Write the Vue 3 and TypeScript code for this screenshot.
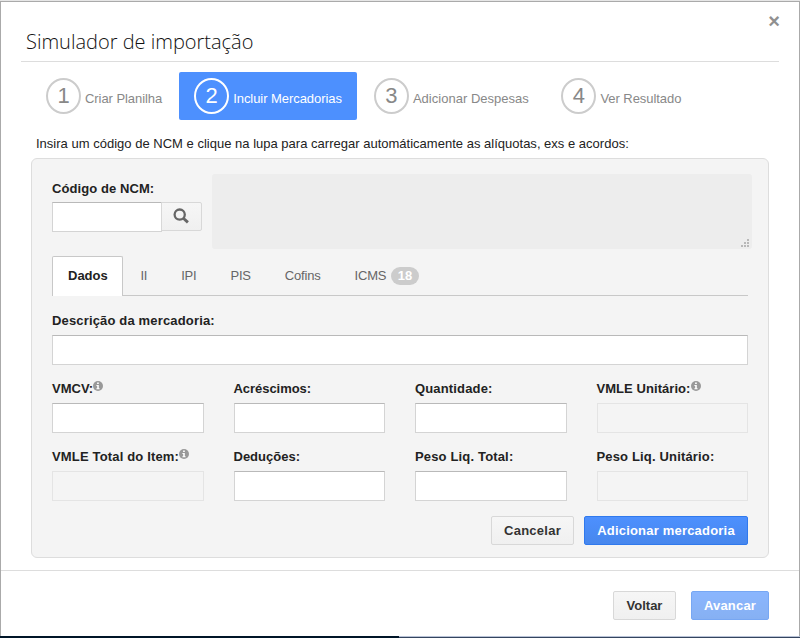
<script setup lang="ts">
import { ref } from 'vue'

interface Step { id: number; label: string }
interface Field { label: string; info?: boolean; disabled?: boolean }

const steps: Step[] = [
  { id: 1, label: 'Criar Planilha' },
  { id: 2, label: 'Incluir Mercadorias' },
  { id: 3, label: 'Adicionar Despesas' },
  { id: 4, label: 'Ver Resultado' },
]
const currentStep = ref(2)

const tabs: { label: string; badge?: number }[] = [
  { label: 'Dados' },
  { label: 'II' },
  { label: 'IPI' },
  { label: 'PIS' },
  { label: 'Cofins' },
  { label: 'ICMS', badge: 18 },
]
const activeTab = ref('Dados')

const fields: Field[] = [
  { label: 'VMCV:', info: true },
  { label: 'Acréscimos:' },
  { label: 'Quantidade:' },
  { label: 'VMLE Unitário:', info: true, disabled: true },
  { label: 'VMLE Total do Item:', info: true, disabled: true },
  { label: 'Deduções:' },
  { label: 'Peso Liq. Total:' },
  { label: 'Peso Liq. Unitário:', disabled: true },
]
</script>

<template>
  <div class="page">
    <div class="modal">
      <header class="head">
        <h1>Simulador de importação</h1>
        <button class="close" type="button">×</button>
      </header>

      <nav class="steps">
        <a v-for="s in steps" :key="s.id" class="step" :class="{ current: s.id === currentStep }" @click="currentStep = s.id">
          <span class="num">{{ s.id }}</span>
          <span class="step-label">{{ s.label }}</span>
        </a>
      </nav>

      <p class="hint">Insira um código de NCM e clique na lupa para carregar automáticamente as alíquotas, exs e acordos:</p>

      <section class="well">
        <div class="ncm">
          <div class="ncm-field">
            <label class="label">Código de NCM:</label>
            <div class="group">
              <input class="input" type="text" />
              <button class="btn search" type="button">
                <svg width="16" height="16" viewBox="0 0 16 16" fill="none" stroke="#666">
                  <circle cx="6.7" cy="6.6" r="5.1" stroke-width="2.3" />
                  <path d="M10.6 10.5 L14.9 14.4" stroke-width="2.9" />
                </svg>
              </button>
            </div>
          </div>
          <div class="details">
            <svg width="9" height="9" viewBox="0 0 9 9" fill="#b8b8b8">
              <path d="M6 0h2v2h-2zM3 3h2v2h-2zM6 3h2v2h-2zM0 6h2v2h-2zM3 6h2v2h-2zM6 6h2v2h-2z" />
            </svg>
          </div>
        </div>

        <ul class="tabs">
          <li v-for="t in tabs" :key="t.label" class="tab" :class="{ active: t.label === activeTab }" @click="activeTab = t.label">
            <span>{{ t.label }}</span>
            <span v-if="t.badge" class="badge">{{ t.badge }}</span>
          </li>
        </ul>

        <label class="label">Descrição da mercadoria:</label>
        <input class="input" type="text" />

        <div class="grid">
          <div v-for="f in fields" :key="f.label" class="field">
            <label class="label">
              <span>{{ f.label }}</span>
              <svg v-if="f.info" class="info" width="10" height="10" viewBox="0 0 10 10">
                <circle cx="5" cy="5" r="5" fill="#999" />
                <path d="M4.1 1.6h1.7v1.4h-1.7zM3.4 4h2.4v3.2h.8v1.1H3.4V7.2h.8V5.1h-.8z" fill="#fff" />
              </svg>
            </label>
            <input class="input" type="text" :disabled="f.disabled" />
          </div>
        </div>

        <div class="actions">
          <button class="btn cancel" type="button">Cancelar</button>
          <button class="btn primary add" type="button">Adicionar mercadoria</button>
        </div>
      </section>

      <footer class="foot">
        <button class="btn back" type="button">Voltar</button>
        <button class="btn primary next" type="button" disabled>Avancar</button>
      </footer>
    </div>
    <div class="strip"><i></i><b></b></div>
  </div>
</template>

<style>
body { margin: 0; background: #e6e6e6; overflow: hidden; }
</style>

<style scoped>
* { box-sizing: border-box; }
.page {
  width: 800px;
  height: 638px;
  padding-top: 1px;
  display: flex;
  flex-direction: column;
  font: 13px/18px "Liberation Sans", Arial, sans-serif;
  color: #222;
}
.modal {
  height: 635px;
  flex: none;
  display: flex;
  flex-direction: column;
  background: #fff;
  border: 1px solid #aaa;
  border-bottom: 0;
}
.head {
  height: 60px;
  margin: 0 20px;
  flex: none;
  display: flex;
  justify-content: space-between;
  border-bottom: 1px solid #ddd;
}
h1 {
  margin: 25px 0 0 5px;
  font: 300 20px/30px "Open Sans", sans-serif;
  color: #111;
}
.close {
  width: 16px;
  height: 20px;
  margin: 9px -3px 0 0;
  padding: 0;
  border: 0;
  background: none;
  font: bold 20px/20px "Liberation Sans", Arial, sans-serif;
  color: #909090;
}
.steps {
  display: flex;
  flex: none;
  height: 48px;
  margin: 10px 0 0 30px;
}
.step {
  display: flex;
  align-items: center;
  padding: 0 15px;
  margin-right: 2px;
  color: #888;
  border-radius: 2px;
}
.step.current { background: #4d90fe; color: #fff; }
.num {
  width: 35px;
  height: 36px;
  border: 2px solid #ccc;
  border-radius: 50%;
  font-size: 22px;
  line-height: 32px;
  text-align: center;
}
.current .num { border-color: #fff; }
.step-label { padding: 5px 0 0 4px; letter-spacing: -.06px; white-space: nowrap; }
.step:nth-child(3) { margin-right: 2.6px; }
.step:nth-child(3) .step-label { letter-spacing: .02px; }
.hint { margin: 14px 0 0 35px; line-height: 20px; letter-spacing: .01px; white-space: nowrap; }
.well {
  flex: none;
  width: 738px;
  height: 400px;
  margin: 4px 0 0 30px;
  padding: 15px 20px;
  border: 1px solid #ddd;
  border-radius: 6px;
  background: #f4f4f4;
}
.label {
  display: flex;
  height: 20px;
  line-height: 20px;
  margin-bottom: 4px;
  font-weight: bold;
  letter-spacing: .16px;
  white-space: nowrap;
}
.info { margin-top: 2px; flex: none; }
.input {
  display: block;
  width: 100%;
  height: 30px;
  padding: 0 8px;
  border: 1px solid #d4d4d4;
  border-top-color: #b9b9b9;
  border-radius: 0;
  background: #fff;
  font: inherit;
}
.input:disabled { background: #f4f4f4; border-color: #e4e4e4; }
.ncm { display: flex; height: 75px; }
.ncm-field { width: 150px; margin: 5px 10px 0 0; }
.ncm-field .label { margin-bottom: 3px; letter-spacing: .08px; }
.group { display: flex; }
.group .input { width: 110px; }
.details {
  width: 540px;
  flex: none;
  display: flex;
  align-items: flex-end;
  justify-content: flex-end;
  padding: 0 2px 1px 0;
  border-radius: 3px;
  background: #ededed;
}
.tabs {
  display: flex;
  height: 40px;
  margin: 7px 0 15px;
  padding: 0;
  list-style: none;
  border-bottom: 1px solid #c8c8c8;
}
.tab {
  display: flex;
  align-items: center;
  height: 40px;
  padding: 0 16px;
  margin-right: 1.8px;
  color: #666;
  letter-spacing: -.15px;
}
.tab.active {
  width: 71px;
  padding: 0 0 1px 15px;
  margin-right: 1.4px;
  border: 1px solid #c8c8c8;
  border-bottom: 0;
  border-radius: 2px 2px 0 0;
  background: #fff;
  color: #222;
  font-weight: bold;
  letter-spacing: 0;
}
.badge {
  height: 18px;
  margin-left: 4.5px;
  padding: 0 7px;
  border-radius: 9px;
  background: #ccc;
  color: #fff;
  font-weight: bold;
  letter-spacing: 0;
}
.grid {
  display: grid;
  grid-template-columns: repeat(4, 1fr);
  gap: 14px 30px;
  margin-top: 14px;
}
.field:nth-child(1) .label { letter-spacing: 0; }
.field:nth-child(4) .label { letter-spacing: .06px; }
.field:nth-child(2) .label { letter-spacing: -.05px; }
.field:nth-child(6) .label { letter-spacing: 0; }
.actions { display: flex; justify-content: flex-end; gap: 10px; margin-top: 15px; }
.btn {
  height: 29px;
  padding: 0;
  border: 1px solid #d8d8d8;
  border-radius: 2px;
  background: linear-gradient(#f6f6f6, #f0f0f0);
  color: #333;
  font: bold 13px/27px "Liberation Sans", Arial, sans-serif;
  text-align: center;
}
.primary { border-color: #3079ed; background: linear-gradient(#4d90fe, #4787ed); color: #fff; }
.primary:disabled { opacity: .65; }
.search { display: flex; justify-content: center; padding: 5px 1px 0 0; width: 41px; margin-left: -1px; border-radius: 0 2px 2px 0; }
.cancel { width: 83px; letter-spacing: .25px; }
.add { width: 164px; letter-spacing: .2px; }
.foot {
  flex: 1;
  display: flex;
  justify-content: flex-end;
  gap: 15px;
  margin-top: 12px;
  padding: 20px 30px 0 0;
  border-top: 1px solid #ddd;
}
.back { width: 63px; }
.next { width: 78px; letter-spacing: .2px; }
.strip { display: flex; height: 2px; }
.strip i { width: 399px; background: #001528; }
.strip b { flex: 1; background: linear-gradient(#b8c2d6 50%, #34445f 50%); }
</style>
